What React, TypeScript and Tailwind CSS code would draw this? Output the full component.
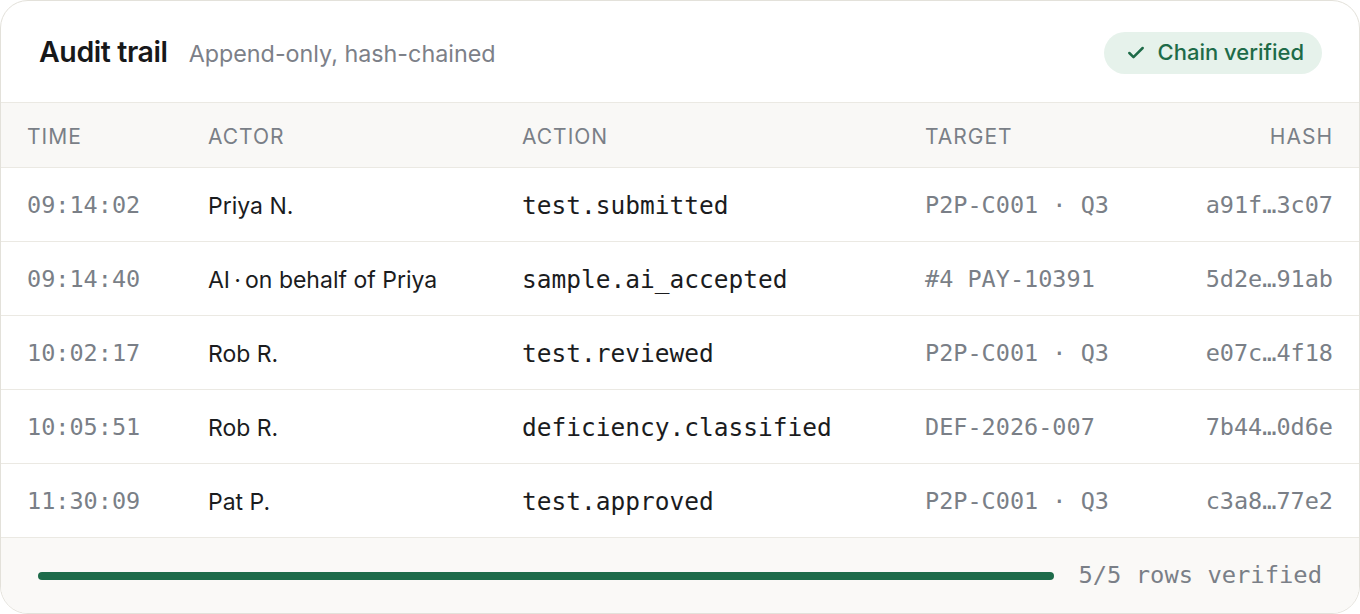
import { Check } from 'lucide-react';

const rows = [
  { time: '09:14:02', actor: 'Priya N.', action: 'test.submitted', target: 'P2P-C001 · Q3', hash: 'a91f…3c07' },
  { time: '09:14:40', actor: 'AI\u2009·\u2009on behalf of Priya', action: 'sample.ai_accepted', target: '#4 PAY-10391', hash: '5d2e…91ab' },
  { time: '10:02:17', actor: 'Rob R.', action: 'test.reviewed', target: 'P2P-C001 · Q3', hash: 'e07c…4f18' },
  { time: '10:05:51', actor: 'Rob R.', action: 'deficiency.classified', target: 'DEF-2026-007', hash: '7b44…0d6e' },
  { time: '11:30:09', actor: 'Pat P.', action: 'test.approved', target: 'P2P-C001 · Q3', hash: 'c3a8…77e2' },
];

const sans = "font-['Inter','Noto_Sans',sans-serif]";
const mono = "font-['DejaVu_Sans_Mono','Liberation_Mono',monospace]";
const cols = 'grid grid-cols-[181px_314px_403px_1fr_auto] items-center pl-[26px] pr-[26px]';

export default function App() {
  return (
    <div className={`h-[614px] w-[1360px] bg-white ${sans}`}>
      <div className="flex h-full flex-col overflow-hidden rounded-[28px] border border-[#e3e1da] bg-white">
        {/* Header */}
        <div className="flex h-[102px] shrink-0 items-center justify-between border-b border-[#ebe9e3] pl-[38px] pr-[37px] pt-[2px]">
          <div className="flex items-baseline gap-[21px]">
            <h1 className="text-[28.5px] font-semibold tracking-[-0.4px] text-[#17181a]">Audit trail</h1>
            <p className="text-[23.3px] text-[#7c8088]">Append-only, hash-chained</p>
          </div>
          <div className="flex h-[42px] items-center gap-[12px] rounded-full bg-[#e6f2eb] pl-[22px] pr-[18px] text-[22px] font-medium text-[#1e6b48]">
            <Check className="h-[20px] w-[20px]" strokeWidth={3} />
            Chain verified
          </div>
        </div>

        {/* Column labels */}
        <div className={`${cols} h-[65px] shrink-0 border-b border-[#ebe9e3] bg-[#f9f8f6] pt-[3px] text-[21px] tracking-[1px] text-[#7a7f87]`}>
          <span>TIME</span>
          <span>ACTOR</span>
          <span>ACTION</span>
          <span>TARGET</span>
          <span className="text-right">HASH</span>
        </div>

        {/* Rows */}
        {rows.map((r) => (
          <div key={r.time} className={`${cols} h-[74px] shrink-0 border-b border-[#ebe9e3] pt-[3px]`}>
            <span className={`${mono} text-[23.5px] text-[#7a7f87]`}>{r.time}</span>
            <span className="text-[23px] text-[#1b1c1e]">{r.actor}</span>
            <span className={`${mono} text-[24.5px] text-[#1b1c1e]`}>{r.action}</span>
            <span className={`${mono} text-[23.5px] text-[#7a7f87]`}>{r.target}</span>
            <span className={`${mono} text-right text-[23.5px] text-[#7a7f87]`}>{r.hash}</span>
          </div>
        ))}

        {/* Footer */}
        <div className="flex flex-1 items-center gap-[24px] bg-[#faf9f7] pl-[37px] pr-[37px]">
          <div className="h-[8px] flex-1 rounded-full bg-[#1d6b4a]" />
          <span className={`${mono} text-[23.8px] text-[#7a7f87]`}>5/5 rows verified</span>
        </div>
      </div>
    </div>
  );
}
